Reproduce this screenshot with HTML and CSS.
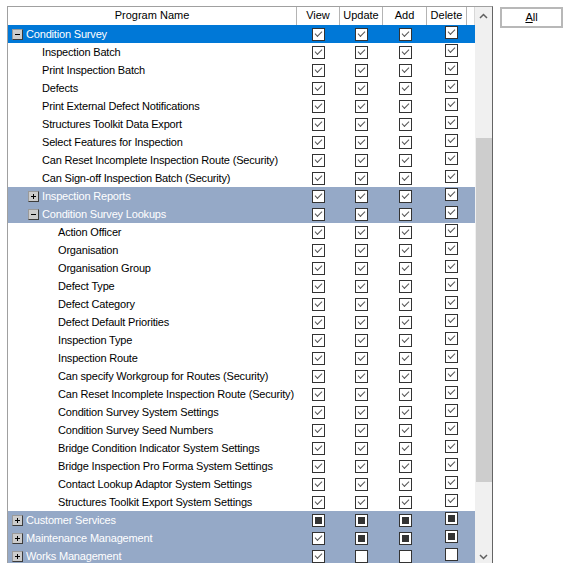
FILE: index.html
```html
<!DOCTYPE html>
<html>
<head>
<meta charset="utf-8">
<link rel="stylesheet" href="styles.css">
</head>
<body>
<div class="page">
  <div class="grid">
    <div class="content">
      <div class="head">
        <div class="hc hname">Program Name</div>
        <div class="hc hv">View</div>
        <div class="hc hu">Update</div>
        <div class="hc ha">Add</div>
        <div class="hc hd">Delete</div>
        <div class="hfill"></div>
      </div>

      <div class="row sel"><div class="nm l0"><span class="exp minus"></span>Condition Survey</div><div class="c"><span class="cb on"></span></div><div class="c"><span class="cb on"></span></div><div class="c"><span class="cb on"></span></div><div class="c d"><span class="cb on"></span></div></div>
      <div class="row"><div class="nm l1 leaf">Inspection Batch</div><div class="c"><span class="cb on"></span></div><div class="c"><span class="cb on"></span></div><div class="c"><span class="cb on"></span></div><div class="c d"><span class="cb on"></span></div></div>
      <div class="row"><div class="nm l1 leaf">Print Inspection Batch</div><div class="c"><span class="cb on"></span></div><div class="c"><span class="cb on"></span></div><div class="c"><span class="cb on"></span></div><div class="c d"><span class="cb on"></span></div></div>
      <div class="row"><div class="nm l1 leaf">Defects</div><div class="c"><span class="cb on"></span></div><div class="c"><span class="cb on"></span></div><div class="c"><span class="cb on"></span></div><div class="c d"><span class="cb on"></span></div></div>
      <div class="row"><div class="nm l1 leaf">Print External Defect Notifications</div><div class="c"><span class="cb on"></span></div><div class="c"><span class="cb on"></span></div><div class="c"><span class="cb on"></span></div><div class="c d"><span class="cb on"></span></div></div>
      <div class="row"><div class="nm l1 leaf">Structures Toolkit Data Export</div><div class="c"><span class="cb on"></span></div><div class="c"><span class="cb on"></span></div><div class="c"><span class="cb on"></span></div><div class="c d"><span class="cb on"></span></div></div>
      <div class="row"><div class="nm l1 leaf">Select Features for Inspection</div><div class="c"><span class="cb on"></span></div><div class="c"><span class="cb on"></span></div><div class="c"><span class="cb on"></span></div><div class="c d"><span class="cb on"></span></div></div>
      <div class="row"><div class="nm l1 leaf">Can Reset Incomplete Inspection Route (Security)</div><div class="c"><span class="cb on"></span></div><div class="c"><span class="cb on"></span></div><div class="c"><span class="cb on"></span></div><div class="c d"><span class="cb on"></span></div></div>
      <div class="row"><div class="nm l1 leaf">Can Sign-off Inspection Batch (Security)</div><div class="c"><span class="cb on"></span></div><div class="c"><span class="cb on"></span></div><div class="c"><span class="cb on"></span></div><div class="c d"><span class="cb on"></span></div></div>
      <div class="row grp"><div class="nm l1"><span class="exp plus"></span>Inspection Reports</div><div class="c"><span class="cb on"></span></div><div class="c"><span class="cb on"></span></div><div class="c"><span class="cb on"></span></div><div class="c d"><span class="cb on"></span></div></div>
      <div class="row grp"><div class="nm l1"><span class="exp minus"></span>Condition Survey Lookups</div><div class="c"><span class="cb on"></span></div><div class="c"><span class="cb on"></span></div><div class="c"><span class="cb on"></span></div><div class="c d"><span class="cb on"></span></div></div>
      <div class="row"><div class="nm l2 leaf">Action Officer</div><div class="c"><span class="cb on"></span></div><div class="c"><span class="cb on"></span></div><div class="c"><span class="cb on"></span></div><div class="c d"><span class="cb on"></span></div></div>
      <div class="row"><div class="nm l2 leaf">Organisation</div><div class="c"><span class="cb on"></span></div><div class="c"><span class="cb on"></span></div><div class="c"><span class="cb on"></span></div><div class="c d"><span class="cb on"></span></div></div>
      <div class="row"><div class="nm l2 leaf">Organisation Group</div><div class="c"><span class="cb on"></span></div><div class="c"><span class="cb on"></span></div><div class="c"><span class="cb on"></span></div><div class="c d"><span class="cb on"></span></div></div>
      <div class="row"><div class="nm l2 leaf">Defect Type</div><div class="c"><span class="cb on"></span></div><div class="c"><span class="cb on"></span></div><div class="c"><span class="cb on"></span></div><div class="c d"><span class="cb on"></span></div></div>
      <div class="row"><div class="nm l2 leaf">Defect Category</div><div class="c"><span class="cb on"></span></div><div class="c"><span class="cb on"></span></div><div class="c"><span class="cb on"></span></div><div class="c d"><span class="cb on"></span></div></div>
      <div class="row"><div class="nm l2 leaf">Defect Default Priorities</div><div class="c"><span class="cb on"></span></div><div class="c"><span class="cb on"></span></div><div class="c"><span class="cb on"></span></div><div class="c d"><span class="cb on"></span></div></div>
      <div class="row"><div class="nm l2 leaf">Inspection Type</div><div class="c"><span class="cb on"></span></div><div class="c"><span class="cb on"></span></div><div class="c"><span class="cb on"></span></div><div class="c d"><span class="cb on"></span></div></div>
      <div class="row"><div class="nm l2 leaf">Inspection Route</div><div class="c"><span class="cb on"></span></div><div class="c"><span class="cb on"></span></div><div class="c"><span class="cb on"></span></div><div class="c d"><span class="cb on"></span></div></div>
      <div class="row"><div class="nm l2 leaf">Can specify Workgroup for Routes (Security)</div><div class="c"><span class="cb on"></span></div><div class="c"><span class="cb on"></span></div><div class="c"><span class="cb on"></span></div><div class="c d"><span class="cb on"></span></div></div>
      <div class="row"><div class="nm l2 leaf">Can Reset Incomplete Inspection Route (Security)</div><div class="c"><span class="cb on"></span></div><div class="c"><span class="cb on"></span></div><div class="c"><span class="cb on"></span></div><div class="c d"><span class="cb on"></span></div></div>
      <div class="row"><div class="nm l2 leaf">Condition Survey System Settings</div><div class="c"><span class="cb on"></span></div><div class="c"><span class="cb on"></span></div><div class="c"><span class="cb on"></span></div><div class="c d"><span class="cb on"></span></div></div>
      <div class="row"><div class="nm l2 leaf">Condition Survey Seed Numbers</div><div class="c"><span class="cb on"></span></div><div class="c"><span class="cb on"></span></div><div class="c"><span class="cb on"></span></div><div class="c d"><span class="cb on"></span></div></div>
      <div class="row"><div class="nm l2 leaf">Bridge Condition Indicator System Settings</div><div class="c"><span class="cb on"></span></div><div class="c"><span class="cb on"></span></div><div class="c"><span class="cb on"></span></div><div class="c d"><span class="cb on"></span></div></div>
      <div class="row"><div class="nm l2 leaf">Bridge Inspection Pro Forma System Settings</div><div class="c"><span class="cb on"></span></div><div class="c"><span class="cb on"></span></div><div class="c"><span class="cb on"></span></div><div class="c d"><span class="cb on"></span></div></div>
      <div class="row"><div class="nm l2 leaf">Contact Lookup Adaptor System Settings</div><div class="c"><span class="cb on"></span></div><div class="c"><span class="cb on"></span></div><div class="c"><span class="cb on"></span></div><div class="c d"><span class="cb on"></span></div></div>
      <div class="row"><div class="nm l2 leaf">Structures Toolkit Export System Settings</div><div class="c"><span class="cb on"></span></div><div class="c"><span class="cb on"></span></div><div class="c"><span class="cb on"></span></div><div class="c d"><span class="cb on"></span></div></div>
      <div class="row grp"><div class="nm l0"><span class="exp plus"></span>Customer Services</div><div class="c"><span class="cb part"></span></div><div class="c"><span class="cb part"></span></div><div class="c"><span class="cb part"></span></div><div class="c d"><span class="cb part"></span></div></div>
      <div class="row grp"><div class="nm l0"><span class="exp plus"></span>Maintenance Management</div><div class="c"><span class="cb on"></span></div><div class="c"><span class="cb part"></span></div><div class="c"><span class="cb part"></span></div><div class="c d"><span class="cb part"></span></div></div>
      <div class="row grp"><div class="nm l0"><span class="exp plus"></span>Works Management</div><div class="c"><span class="cb on"></span></div><div class="c"><span class="cb"></span></div><div class="c"><span class="cb"></span></div><div class="c d"><span class="cb"></span></div></div>
    </div>
    <div class="sb">
      <div class="sb-btn"><svg width="9" height="6" viewBox="0 0 9 6"><polyline points="1,5 4.5,1.5 8,5" fill="none" stroke="#606060" stroke-width="1.5"/></svg></div>
      <div class="sb-track"><div class="sb-thumb"></div></div>
      <div class="sb-btn"><svg width="9" height="6" viewBox="0 0 9 6"><polyline points="1,1 4.5,4.5 8,1" fill="none" stroke="#606060" stroke-width="1.5"/></svg></div>
    </div>
  </div>
  <button class="btn"><u>A</u>ll</button>
</div>
</body>
</html>
```

FILE: styles.css
```css
html, body {
  margin: 0;
  padding: 0;
  background: #ffffff;
  overflow: hidden;
}

body {
  font-family: "Liberation Sans", Arial, sans-serif;
  font-size: 11px;
  color: #000000;
}

.page {
  display: flex;
  align-items: flex-start;
  padding: 6px 0 0 7px;
}

.grid {
  display: flex;
  width: 484px;
  height: 558px;
  border-top: 1px solid #a0a0a0;
  border-left: 1px solid #a0a0a0;
  border-right: 1px solid #646464;
  border-bottom: 1px solid #646464;
  background: #ffffff;
  flex-shrink: 0;
}

.content {
  width: 467px;
  display: flex;
  flex-direction: column;
}

.head {
  display: flex;
  height: 18px;
  flex-shrink: 0;
}

.hc {
  display: flex;
  align-items: center;
  justify-content: center;
  border-right: 1px solid #b4b4b4;
  box-shadow: inset 1px 0 0 #ffffff;
  box-sizing: border-box;
  line-height: 1;
  padding-bottom: 1px;
}

.hname { width: 289px; }
.hv { width: 43px; }
.hu { width: 43px; }
.ha { width: 44px; }
.hd { width: 40px; }
.hfill { width: 8px; border-right: 1px solid #d8d8d8; box-sizing: border-box; }

.row {
  display: grid;
  grid-template-columns: 289px 43px 43px 44px 48px;
  height: 18px;
  flex-shrink: 0;
}

.row.sel {
  background: #0078d7;
  color: #ffffff;
}

.row.grp {
  background: #95a9c7;
  color: #ffffff;
}

.nm {
  display: flex;
  align-items: center;
  white-space: nowrap;
  overflow: hidden;
  letter-spacing: -0.18px;
}

.l0 { padding-left: 4px; }
.l1 { padding-left: 20px; }
.l2 { padding-left: 36px; }
.l1.leaf { padding-left: 34px; }
.l2.leaf { padding-left: 50px; }

.exp {
  display: grid;
  place-items: center;
  width: 11px;
  height: 11px;
  box-sizing: border-box;
  border: 1px solid;
  border-color: #9a9a9a #3c3c3c #3c3c3c #9a9a9a;
  background: #cccccc;
  margin-right: 3px;
  flex-shrink: 0;
}

.exp::before,
.exp::after {
  content: "";
  grid-area: 1 / 1;
  background: #000000;
}

.exp::before {
  width: 5px;
  height: 1px;
}

.exp.plus::after {
  width: 1px;
  height: 5px;
}

.c {
  display: flex;
  align-items: center;
  justify-content: center;
}

.c.d {
  padding-bottom: 4px;
}

.cb {
  display: flex;
  align-items: center;
  justify-content: center;
  width: 13px;
  height: 13px;
  box-sizing: border-box;
  border: 1px solid #333333;
  background: #ffffff;
}

.cb.on::after {
  content: "";
  width: 6px;
  height: 3px;
  margin-top: -2px;
  border-left: 1.3px solid #555555;
  border-bottom: 1.3px solid #555555;
  transform: rotate(-45deg);
}

.cb.part::after {
  content: "";
  width: 7px;
  height: 7px;
  background: #333333;
}

.sb {
  width: 17px;
  display: flex;
  flex-direction: column;
  background: #f0f0f0;
}

.sb-btn {
  height: 17px;
  display: flex;
  align-items: center;
  justify-content: center;
  flex-shrink: 0;
}

.sb-track {
  flex: 1;
  padding: 114px 0 0 1px;
}

.sb-thumb {
  height: 344px;
  background: #cdcdcd;
}

.btn {
  margin: 1px 0 0 7px;
  width: 63px;
  height: 21px;
  padding: 0;
  border: 2px solid #b8b8b8;
  background: #ffffff;
  font-family: "Liberation Sans", Arial, sans-serif;
  font-size: 11px;
  color: #000000;
  line-height: 1;
}
```
